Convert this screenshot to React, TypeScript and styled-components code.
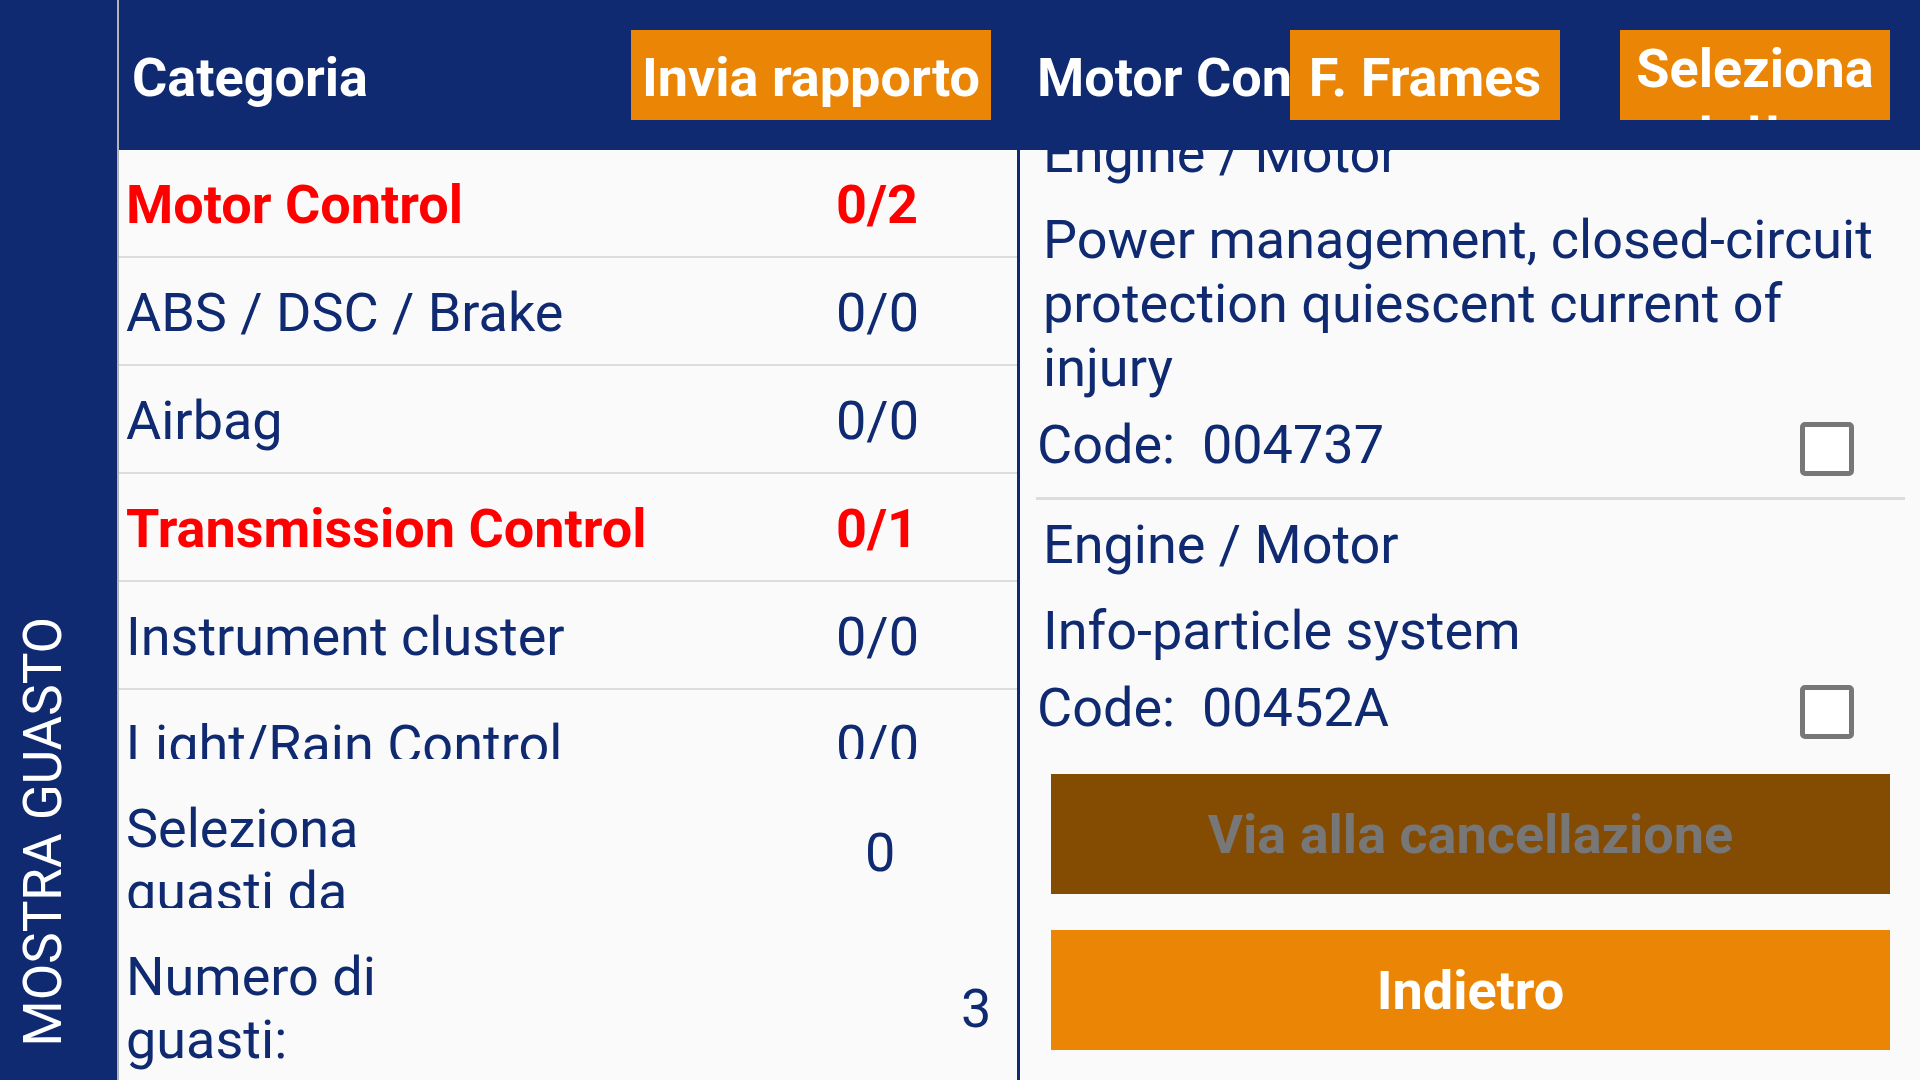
import React from 'react'
import styled, { createGlobalStyle } from 'styled-components'

const NAVY = '#0f2a71'
const ORANGE = '#eb8505'
const BROWN = '#844b03'
const RED = '#ff0000'
const PAPER = '#fafafa'
const RULE = '#dcdcdc'

const GlobalStyle = createGlobalStyle`
  html, body {
    margin: 0;
    padding: 0;
  }
  body {
    background: ${PAPER};
    font-family: Roboto, "Liberation Sans", sans-serif;
    overflow: hidden;
  }
  * {
    box-sizing: border-box;
  }
`

const Screen = styled.div`
  display: flex;
  width: 1920px;
  height: 1080px;
  overflow: hidden;
  background: ${PAPER};
`

const Sidebar = styled.div`
  flex: 0 0 119px;
  background: ${NAVY};
  border-right: 2px solid #b4b4b4;
  display: flex;
  flex-direction: column;
  justify-content: flex-end;
  padding: 0 0 33px 12px;
`

const SideLabel = styled.div`
  writing-mode: vertical-rl;
  transform: rotate(180deg);
  color: #fff;
  font-size: 53px;
  white-space: nowrap;
`

const Column = styled.div<{ $width?: number; $divider?: boolean }>`
  flex: ${p => (p.$width ? `0 0 ${p.$width}px` : '1 1 auto')};
  display: flex;
  flex-direction: column;
  min-width: 0;
  border-right: ${p => (p.$divider ? `3px solid ${NAVY}` : 'none')};
`

const HeaderBar = styled.div<{ $left: number; $right: number; $spread?: boolean }>`
  flex: 0 0 150px;
  background: ${NAVY};
  display: flex;
  align-items: flex-start;
  justify-content: ${p => (p.$spread ? 'space-between' : 'flex-start')};
  padding: 0 ${p => p.$right}px 0 ${p => p.$left}px;
  overflow: hidden;
`

const HeaderTitle = styled.div<{ $width?: number }>`
  flex: ${p => (p.$width ? `0 0 ${p.$width}px` : '0 1 auto')};
  margin-top: 46px;
  color: #fff;
  font-weight: 700;
  font-size: 54px;
  line-height: 64px;
  white-space: nowrap;
  overflow: hidden;
`

const HeaderButton = styled.div<{ $width: number; $padTop: number; $gapBefore?: number }>`
  flex: 0 0 ${p => p.$width}px;
  height: 90px;
  margin-top: 30px;
  margin-left: ${p => p.$gapBefore ?? 0}px;
  padding-top: ${p => p.$padTop}px;
  background: ${ORANGE};
  color: #fff;
  font-weight: 700;
  font-size: 54px;
  line-height: 64px;
  text-align: center;
  overflow: hidden;
`

const CategoryList = styled.div`
  flex: 0 0 609px;
  overflow: hidden;
`

const CategoryRow = styled.div<{ $alert?: boolean }>`
  height: 108px;
  display: grid;
  grid-template-columns: 710px 1fr;
  align-items: center;
  padding: 3px 0 0 7px;
  border-bottom: 2px solid ${RULE};
  color: ${p => (p.$alert ? RED : NAVY)};
  font-weight: ${p => (p.$alert ? 700 : 400)};
  font-size: 54px;
  line-height: 64px;
  white-space: nowrap;
`

const Summary = styled.div`
  padding: 38px 0 0 7px;
`

const SummaryRow = styled.div`
  display: flex;
  align-items: center;
  margin-bottom: 37px;
  color: ${NAVY};
  font-size: 54px;
  line-height: 63px;
`

const SummaryLabel = styled.div<{ $height: number }>`
  flex: 0 0 330px;
  height: ${p => p.$height}px;
  overflow: hidden;
`

const SummaryValue = styled.div<{ $offset: number }>`
  margin-left: ${p => p.$offset}px;
`

const FaultList = styled.div`
  flex: 1 1 auto;
  overflow: hidden;
  padding: 0 15px 0 16px;
`

const FaultScroll = styled.div<{ $scroll: number }>`
  margin-top: ${p => -p.$scroll}px;
`

const FaultItem = styled.div`
  padding: 13px 0 20px;
  border-bottom: 3px solid ${RULE};
  color: ${NAVY};
  font-size: 54px;
  line-height: 64px;
`

const FaultText = styled.div<{ $gap?: number }>`
  padding-left: 7px;
  margin-top: ${p => p.$gap ?? 0}px;
`

const CodeRow = styled.div`
  margin-top: 13px;
  height: 64px;
  display: flex;
  align-items: center;
  justify-content: space-between;
  padding: 0 51px 0 1px;
  white-space: pre;
`

const Checkbox = styled.div`
  width: 54px;
  height: 54px;
  margin-top: 7px;
  background: #fff;
  border: 5px solid #777;
  border-radius: 5px;
`

const ActionArea = styled.div`
  flex: 0 0 330px;
  display: flex;
  flex-direction: column;
  gap: 36px;
  padding: 24px 30px 30px 31px;
`

const ActionButton = styled.div<{ $disabled?: boolean }>`
  height: 120px;
  display: flex;
  align-items: center;
  justify-content: center;
  background: ${p => (p.$disabled ? BROWN : ORANGE)};
  color: ${p => (p.$disabled ? '#777' : '#fff')};
  font-weight: 700;
  font-size: 54px;
`

const categories = [
  { name: 'Motor Control', count: '0/2', alert: true },
  { name: 'ABS / DSC / Brake', count: '0/0' },
  { name: 'Airbag', count: '0/0' },
  { name: 'Transmission Control', count: '0/1', alert: true },
  { name: 'Instrument cluster', count: '0/0' },
  { name: 'Light/Rain Control', count: '0/0' },
  { name: 'Central Locking', count: '0/0' },
]

const faults = [
  {
    group: 'Engine / Motor',
    text: 'Power management, closed-circuit protection quiescent current of injury',
    code: '004737',
  },
  {
    group: 'Engine / Motor',
    text: 'Info-particle system',
    code: '00452A',
  },
]

export default function App() {
  return (
    <>
      <GlobalStyle />
      <Screen>
        <Sidebar>
          <SideLabel>MOSTRA GUASTO</SideLabel>
        </Sidebar>

        <Column $width={901} $divider>
          <HeaderBar $left={13} $right={26} $spread>
            <HeaderTitle>Categoria</HeaderTitle>
            <HeaderButton $width={360} $padTop={16}>Invia rapporto</HeaderButton>
          </HeaderBar>
          <CategoryList>
            {categories.map(c => (
              <CategoryRow key={c.name} $alert={c.alert}>
                <span>{c.name}</span>
                <span>{c.count}</span>
              </CategoryRow>
            ))}
          </CategoryList>
          <Summary>
            <SummaryRow>
              <SummaryLabel $height={111}>Seleziona guasti da cancellare</SummaryLabel>
              <SummaryValue $offset={409}>0</SummaryValue>
            </SummaryRow>
            <SummaryRow>
              <SummaryLabel $height={126}>Numero di guasti:</SummaryLabel>
              <SummaryValue $offset={505}>3</SummaryValue>
            </SummaryRow>
          </Summary>
        </Column>

        <Column>
          <HeaderBar $left={17} $right={30}>
            <HeaderTitle $width={253}>Motor Control</HeaderTitle>
            <HeaderButton $width={270} $padTop={16}>F. Frames</HeaderButton>
            <HeaderButton $width={270} $padTop={7} $gapBefore={60}>Seleziona tutto</HeaderButton>
          </HeaderBar>
          <FaultList>
            <FaultScroll $scroll={41}>
              {faults.map(f => (
                <FaultItem key={f.code}>
                  <FaultText>{f.group}</FaultText>
                  <FaultText $gap={22}>{f.text}</FaultText>
                  <CodeRow>
                    <span>{`Code:  ${f.code}`}</span>
                    <Checkbox />
                  </CodeRow>
                </FaultItem>
              ))}
            </FaultScroll>
          </FaultList>
          <ActionArea>
            <ActionButton $disabled>Via alla cancellazione</ActionButton>
            <ActionButton>Indietro</ActionButton>
          </ActionArea>
        </Column>
      </Screen>
    </>
  )
}
